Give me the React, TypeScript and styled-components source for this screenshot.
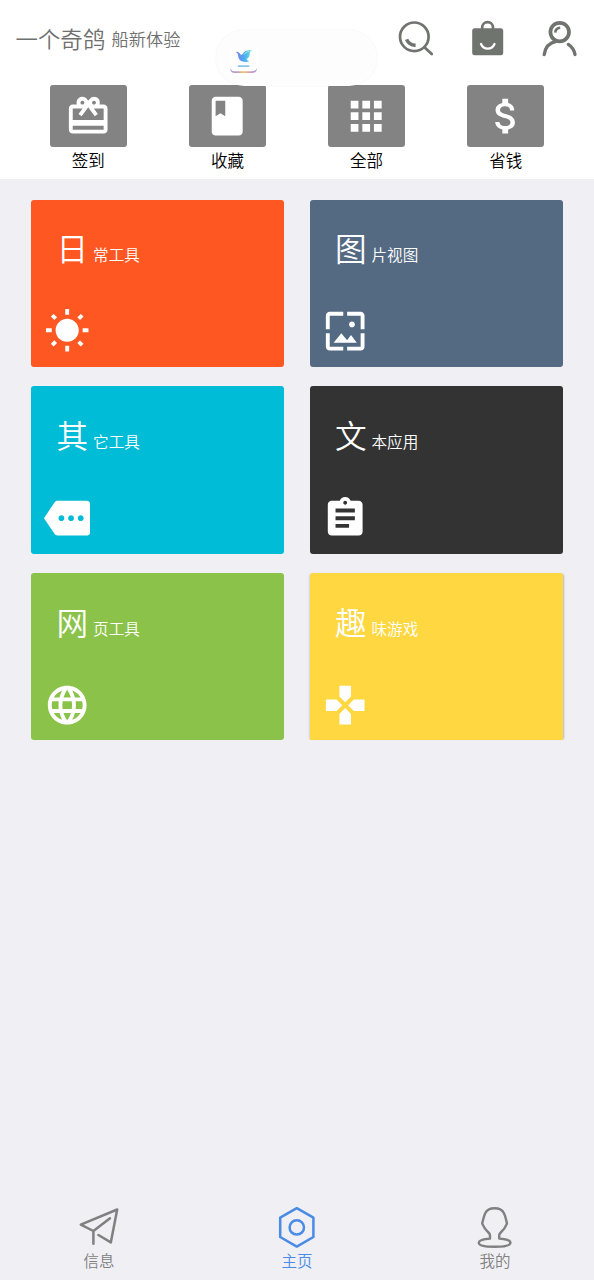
import React from 'react'
import { IconType } from 'react-icons'
import {
  MdApps,
  MdAssignment,
  MdAttachMoney,
  MdBook,
  MdCardGiftcard,
  MdGamepad,
  MdLanguage,
  MdMore,
  MdWallpaper,
  MdWbSunny,
} from 'react-icons/md'
import styled, { createGlobalStyle } from 'styled-components'

const GlobalStyle = createGlobalStyle`
  * {
    box-sizing: border-box;
  }

  body {
    margin: 0;
    background: #efeff4;
    font-family: 'Noto Sans CJK SC', sans-serif;
    font-weight: 350;
  }
`

const Screen = styled.div`
  position: relative;
  display: flex;
  flex-direction: column;
  width: 594px;
  height: 1280px;
  overflow: hidden;
  background: #efeff4;
`

const Header = styled.header`
  height: 179.4px;
  background: #fff;
`

const TitleBar = styled.div`
  display: flex;
  align-items: center;
  height: 85.2px;
  padding: 0 14px 7.5px 15.5px;
`

const Title = styled.h1`
  margin: 0 0 2px;
  font-size: 22.4px;
  font-weight: 350;
  line-height: 30px;
  color: #6f6f6f;
`

const Subtitle = styled.span`
  margin-left: 6.5px;
  font-size: 17.2px;
  line-height: 30px;
  color: #6f6f6f;
`

const Actions = styled.div`
  display: flex;
  gap: 32px;
  margin-left: auto;

  svg {
    display: block;
    width: 40px;
    height: 40px;
  }
`

const Shortcuts = styled.nav`
  display: grid;
  grid-template-columns: repeat(4, 139.2px);
  justify-content: center;
`

const Shortcut = styled.div`
  display: flex;
  flex-direction: column;
  align-items: center;
  font-size: 16.5px;
  line-height: 26px;
  color: #000;
`

const ShortcutTile = styled.div`
  display: flex;
  align-items: center;
  justify-content: center;
  width: 77.4px;
  height: 62px;
  border-radius: 3px;
  background: #838383;
  color: #fff;
`

const Grid = styled.main`
  display: grid;
  grid-template-columns: 253px 253px;
  grid-auto-rows: 167.3px;
  gap: 19.3px 25.4px;
  padding: 20.5px 0 0 31.3px;
`

const Card = styled.section<{ $color: string; $raised?: boolean }>`
  display: flex;
  flex-direction: column;
  justify-content: space-between;
  padding: 24.5px 12.5px 12.4px;
  border-radius: ${({ $raised }) => ($raised ? '3px 3px 0 0' : '3px')};
  background: ${({ $color }) => $color};
  box-shadow: ${({ $raised }) =>
    $raised
      ? '2px 0 2px -1px rgba(0, 0, 0, 0.22), -2px 0 2px -1px rgba(0, 0, 0, 0.12)'
      : 'none'};
  color: #fff;

  svg {
    display: block;
  }
`

const CardTitle = styled.h2`
  margin: 0 0 0 12.7px;
  font-size: 15.6px;
  font-weight: 350;
  line-height: 46px;
`

const Initial = styled.span`
  margin-right: 5px;
  font-size: 31.6px;
`

const TabBar = styled.footer`
  display: grid;
  grid-template-columns: repeat(3, 1fr);
  height: 77px;
  margin-top: auto;
`

const Tab = styled.div<{ $active?: boolean }>`
  display: flex;
  flex-direction: column;
  align-items: center;
  font-size: 15.5px;
  line-height: 19px;
  color: ${({ $active }) => ($active ? '#4a8be6' : '#808080')};

  svg {
    display: block;
    width: 48px;
    height: 48px;
  }
`

const Island = styled.div`
  position: absolute;
  top: 30px;
  left: 216px;
  display: flex;
  align-items: center;
  width: 161px;
  height: 56px;
  padding: 8px 0 0 12px;
  border-radius: 28px;
  background: #fdfdfd;
  box-shadow: 0 0 2px rgba(0, 0, 0, 0.07);
`

const strokeProps = {
  fill: 'none',
  stroke: 'currentColor',
  strokeLinecap: 'round' as const,
  strokeLinejoin: 'round' as const,
}

const SearchIcon = () => (
  <svg viewBox="0 0 40 40" color="#70746f" {...strokeProps}>
    <circle cx="18.3" cy="17.8" r="14.3" strokeWidth="2.7" />
    <path d="M28.7 28.4l7 6.7" strokeWidth="2.8" />
    <path d="M10.6 20.4c1.5 3.5 4.6 5.8 9 6" strokeWidth="3.6" strokeLinecap="butt" />
  </svg>
)

const BagIcon = () => (
  <svg viewBox="0 0 40 40" color="#70746f" {...strokeProps}>
    <rect x="4.2" y="9.2" width="31" height="27.1" rx="2.5" fill="currentColor" stroke="none" />
    <path d="M14.2 10V8.6a5.4 5.4 0 0 1 10.8 0V10" strokeWidth="2.7" />
    <path d="M13 25c2.7 6.2 10.8 6.2 13.5 0" stroke="#fff" strokeWidth="2.3" />
  </svg>
)

const UserIcon = () => (
  <svg viewBox="0 0 40 40" color="#70746f" {...strokeProps}>
    <circle cx="19.7" cy="13.1" r="9.3" strokeWidth="3.7" />
    <path d="M15.3 13.6c.1-3 1.6-4.7 4.9-4.9" strokeWidth="2.6" strokeLinecap="butt" />
    <path d="M4.2 35.6c.9-7 5.2-12 12-13.3M28.3 25.4c3.6 2.4 6 5.9 6.7 10.2" strokeWidth="3.3" />
  </svg>
)

const SendIcon = () => (
  <svg viewBox="0 0 48 48" strokeWidth="2.5" {...strokeProps}>
    <path d="M18.4 40.7V28L5.8 21.6 42.2 6.5 35.8 39.4l-12.4-7.4M18.4 28L35 15.2" />
  </svg>
)

const HomeIcon = () => (
  <svg viewBox="0 0 48 48" strokeWidth="2.5" {...strokeProps}>
    <path d="M23.8 5.2l16.6 9.4v19.4l-16.6 9.6L7.2 34V14.6z" />
    <circle cx="23.8" cy="24.4" r="7.2" />
  </svg>
)

const ProfileIcon = () => (
  <svg viewBox="0 0 48 48" strokeWidth="2.4" {...strokeProps}>
    <path d="M19 35.6v-3.2c0-1.3-.6-2-1.6-2.9-2.9-2.6-4.7-5.4-6.2-8.9.9-3.4 1.3-6.8 2.9-10.2 1.6-3.4 4.6-5.1 9.5-5.1s7.9 1.7 9.5 5.1c1.600 3.400 2 6.800 2.900 10.200-1.500 3.500-3.300 6.300-6.200 8.900-1 .9-1.600 1.600-1.600 2.900v3.200c6.400.3 11.200 2 11.200 4.200 0 2.600-6 4-15.800 4S7.800 42.400 7.800 39.800c0-2.200 4.800-3.900 11.200-4.200" />
  </svg>
)

const DoveLogo = () => (
  <svg width="32" height="32" viewBox="0 0 32 32">
    <defs>
      <linearGradient id="dove" x1="0" y1="0" x2="1" y2="0">
        <stop offset="0" stopColor="#7e7ceb" />
        <stop offset=".5" stopColor="#4caaf2" />
        <stop offset="1" stopColor="#60e5d3" />
      </linearGradient>
      <linearGradient id="rim" x1="0" y1="0" x2="1" y2="0">
        <stop offset="0" stopColor="#a69be8" />
        <stop offset=".3" stopColor="#c0a0b5" />
        <stop offset=".5" stopColor="#f0c46a" />
        <stop offset=".75" stopColor="#d79ac4" />
        <stop offset="1" stopColor="#8e97d4" />
      </linearGradient>
    </defs>
    <path d="M2 2h28v22q0 5-5 5H7q-5 0-5-5z" fill="#fff" />
    <path
      d="M7.8 5.7c2.4-.2 3.9.6 4.3 2.6 1.8.9 2.7-.2 3.3-1.5 1.5-2.1 4.6-3.1 8.8-2.3-1.800.6-2.400 1.400-2.500 2.700-.1 3.300-1.200 4.900-3.200 5.600.5 1.400 1.500 1.900 3.100 2.300-2.300 1.400-5.400 1.100-7.900.1-2.800-1.100-3.500-4.100-3.800-6.800-.2-1.200-1.100-1.800-2.100-2.700z"
      fill="url(#dove)"
    />
    <path d="M15.9 8.800c1-2 2.800-3 5.300-3.200" fill="none" stroke="#d6fafa" strokeWidth=".6" />
    <rect x="9.6" y="19.2" width="12" height="1.7" rx=".8" fill="#8cc4e8" />
    <path
      d="M2 22c.5 2 2.200 3.200 4.500 3.200h18c2.300 0 4-1.200 4.500-3.200-.1 3.400-2 5-4.700 5H6.700C4 27 2.100 25.400 2 22z"
      fill="url(#rim)"
    />
  </svg>
)

const SHORTCUTS: { label: string; icon: IconType }[] = [
  { label: '签到', icon: MdCardGiftcard },
  { label: '收藏', icon: MdBook },
  { label: '全部', icon: MdApps },
  { label: '省钱', icon: MdAttachMoney },
]

const CARDS: { title: string; color: string; icon: IconType; raised?: boolean }[] = [
  { title: '日常工具', color: '#ff5722', icon: MdWbSunny },
  { title: '图片视图', color: '#546a82', icon: MdWallpaper },
  { title: '其它工具', color: '#00bcd6', icon: MdMore },
  { title: '文本应用', color: '#333333', icon: MdAssignment },
  { title: '网页工具', color: '#8bc34a', icon: MdLanguage },
  { title: '趣味游戏', color: '#ffd740', icon: MdGamepad, raised: true },
]

const App = () => {
  return (
    <Screen>
      <GlobalStyle />
      <Header>
        <TitleBar>
          <Title>一个奇鸽</Title>
          <Subtitle>船新体验</Subtitle>
          <Actions>
            <SearchIcon />
            <BagIcon />
            <UserIcon />
          </Actions>
        </TitleBar>
        <Shortcuts>
          {SHORTCUTS.map(({ label, icon: Icon }) => (
            <Shortcut key={label}>
              <ShortcutTile>
                <Icon size={46.4} />
              </ShortcutTile>
              {label}
            </Shortcut>
          ))}
        </Shortcuts>
      </Header>

      <Grid>
        {CARDS.map(({ title, color, icon: Icon, raised }) => (
          <Card key={title} $color={color} $raised={raised}>
            <CardTitle>
              <Initial>{title[0]}</Initial>
              {title.slice(1)}
            </CardTitle>
            <Icon size={46.4} />
          </Card>
        ))}
      </Grid>

      <TabBar>
        <Tab>
          <SendIcon />
          信息
        </Tab>
        <Tab $active>
          <HomeIcon />
          主页
        </Tab>
        <Tab>
          <ProfileIcon />
          我的
        </Tab>
      </TabBar>

      <Island>
        <DoveLogo />
      </Island>
    </Screen>
  )
}

export default App
